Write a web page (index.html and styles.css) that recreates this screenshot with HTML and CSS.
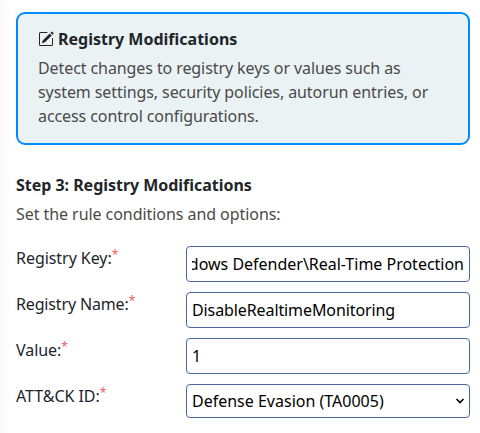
FILE: index.html
```html
<!DOCTYPE html>
<html lang="en">
<head>
<meta charset="utf-8">
<title>Registry Modifications</title>
<link rel="stylesheet" href="styles.css">
</head>
<body>
<section class="card">
<h2 class="card-title"><svg class="icon" viewBox="0 0 16 16" fill="currentColor"><path d="M15.502 1.94a.5.5 0 0 1 0 .706L14.459 3.69l-2-2L13.502.646a.5.5 0 0 1 .707 0l1.293 1.293zm-1.75 2.456-2-2L4.939 9.21a.5.5 0 0 0-.121.196l-.805 2.414a.25.25 0 0 0 .316.316l2.414-.805a.5.5 0 0 0 .196-.12z"/><path fill-rule="evenodd" d="M1 13.5A1.5 1.5 0 0 0 2.500 15h11a1.500 1.500 0 0 0 1.500-1.500v-6a.5.5 0 0 0-1 0v6a.5.5 0 0 1-.5.5h-11a.5.5 0 0 1-.5-.5v-11a.5.5 0 0 1 .5-.5H9a.5.5 0 0 0 0-1H2.500A1.500 1.500 0 0 0 1 2.500z"/></svg>Registry Modifications</h2>
<p class="card-text">Detect changes to registry keys or values such as system settings, security policies, autorun entries, or access control configurations.</p>
</section>
<h3 class="step">Step 3: Registry Modifications</h3>
<p class="hint">Set the rule conditions and options:</p>
<form class="form">
<div class="row"><label class="label">Registry Key:<span class="req">*</span></label><div class="field"><div class="scrolled"><span>dows Defender\Real-Time Protection</span></div></div></div>
<div class="row"><label class="label label-tight">Registry Name:<span class="req">*</span></label><div class="field tight">DisableRealtimeMonitoring</div></div>
<div class="row"><label class="label">Value:<span class="req">*</span></label><div class="field">1</div></div>
<div class="row"><label class="label">ATT&amp;CK ID:<span class="req">*</span></label><div class="field select">Defense Evasion (TA0005)<svg class="chevron" viewBox="0 0 10 6"><path d="M1.500 1l3.500 3.500 3.500-3.500" fill="none" stroke="currentColor" stroke-width="1.6"/></svg></div></div>
</form>
</body>
</html>
```
FILE: styles.css
```css
* { box-sizing: border-box; }
body {
  margin: 0;
  padding: 12px 10px 0 16px;
  background: linear-gradient(to right, #fafafa, #fff 12px);
  font: 16px/24px "Noto Sans", sans-serif;
  color: #212529;
  overflow: hidden;
}
h2, h3, p { margin: 0; font-size: 16px; }
.card {
  width: 454px;
  height: 133px;
  padding: 13px 20px;
  border: 2px solid #008cff;
  border-radius: 9px;
  background: #eaf2f4;
}
.card-title { margin-bottom: 5px; }
.icon { width: 16px; height: 16px; margin-right: 4px; vertical-align: -2px; }
.card-text, .hint { color: #4a4a4a; letter-spacing: -0.09px; }
.hint { letter-spacing: -0.06px; }
.step { margin-top: 28px; line-height: 24px; letter-spacing: -0.03px; }
.hint { margin-top: 5px; }
.form { margin-top: 20px; display: grid; gap: 10px; }
.row { display: grid; grid-template-columns: 170px 284px; height: 36px; }
.label { display: flex; letter-spacing: -0.05px; }
.label-tight { letter-spacing: -0.15px; }
.req { color: #ee6060; font-size: 12px; line-height: 18px; }
.field {
  display: flex;
  align-items: center;
  height: 36px;
  padding: 0 5px;
  border: 1px solid #4a6799;
  border-radius: 4px;
  background: #fff;
  color: #000;
  white-space: nowrap;
}
.scrolled {
  display: flex;
  flex: 1;
  justify-content: flex-end;
  min-width: 0;
  overflow: hidden;
  letter-spacing: -0.01px;
}
.tight { letter-spacing: -0.1px; }
.select { justify-content: space-between; height: 34px; }
.chevron { width: 10px; height: 6px; margin-right: -1px; }
```
